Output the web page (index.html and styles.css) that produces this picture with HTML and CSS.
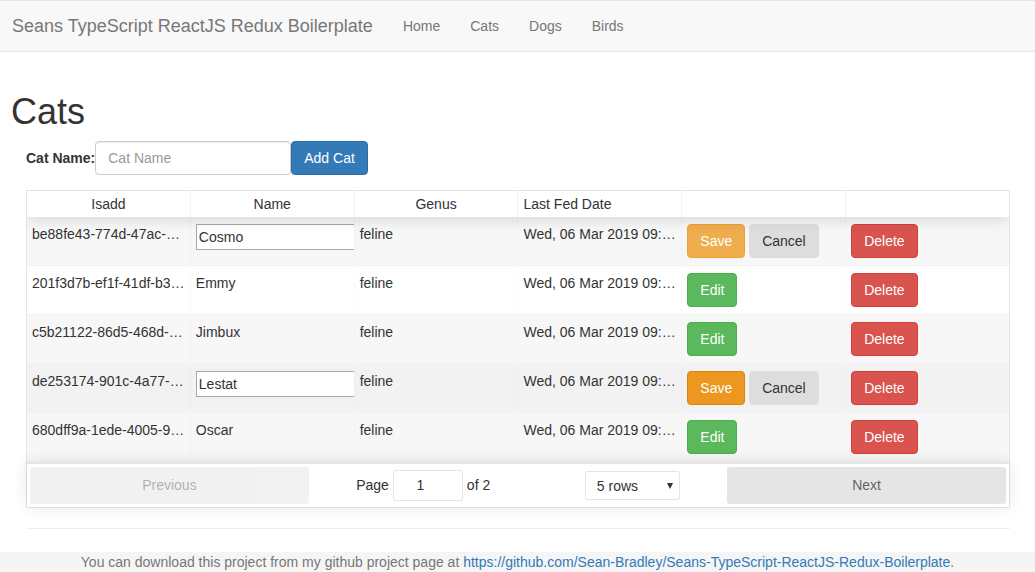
FILE: index.html
```html
<!DOCTYPE html>
<html lang="en">
<head>
<meta charset="utf-8">
<title>Cats</title>
<link rel="stylesheet" href="styles.css">
</head>
<body>
<nav class="navbar">
  <a class="brand" href="#">Seans TypeScript ReactJS Redux Boilerplate</a>
  <ul class="nav">
    <li><a href="#">Home</a></li>
    <li><a href="#">Cats</a></li>
    <li><a href="#">Dogs</a></li>
    <li><a href="#">Birds</a></li>
  </ul>
</nav>
<main class="page">
  <h1 class="title">Cats</h1>
  <div class="content">
    <form class="add-form">
      <label class="add-label">Cat Name:</label>
      <input class="form-control" type="text" placeholder="Cat Name">
      <button type="button" class="btn btn-primary">Add Cat</button>
    </form>

    <div class="rtable">
      <div class="rt-table">
        <div class="thead">
          <div class="tr">
            <div class="th">Isadd</div>
            <div class="th">Name</div>
            <div class="th">Genus</div>
            <div class="th th-left">Last Fed Date</div>
            <div class="th"></div>
            <div class="th"></div>
          </div>
        </div>
        <div class="tbody">
          <div class="tr-group">
            <div class="tr odd">
              <div class="td">be88fe43-774d-47ac-9f2b-3e1c5d7a8b90</div>
              <div class="td"><input class="cell-input" type="text" value="Cosmo"></div>
              <div class="td">feline</div>
              <div class="td">Wed, 06 Mar 2019 09:14:32 GMT</div>
              <div class="td"><button class="btn btn-warning">Save</button> <button class="btn btn-grey">Cancel</button></div>
              <div class="td"><button class="btn btn-danger">Delete</button></div>
            </div>
          </div>
          <div class="tr-group">
            <div class="tr">
              <div class="td">201f3d7b-ef1f-41df-b3a6-8c2d4e5f6a71</div>
              <div class="td">Emmy</div>
              <div class="td">feline</div>
              <div class="td">Wed, 06 Mar 2019 09:14:32 GMT</div>
              <div class="td"><button class="btn btn-success">Edit</button></div>
              <div class="td"><button class="btn btn-danger">Delete</button></div>
            </div>
          </div>
          <div class="tr-group">
            <div class="tr odd">
              <div class="td">c5b21122-86d5-468d-a1b2-7f3e9d0c4b55</div>
              <div class="td">Jimbux</div>
              <div class="td">feline</div>
              <div class="td">Wed, 06 Mar 2019 09:14:32 GMT</div>
              <div class="td"><button class="btn btn-success">Edit</button></div>
              <div class="td"><button class="btn btn-danger">Delete</button></div>
            </div>
          </div>
          <div class="tr-group">
            <div class="tr hover">
              <div class="td">de253174-901c-4a77-b5c8-2a6d1e3f9c08</div>
              <div class="td"><input class="cell-input" type="text" value="Lestat"></div>
              <div class="td">feline</div>
              <div class="td">Wed, 06 Mar 2019 09:14:32 GMT</div>
              <div class="td"><button class="btn btn-warning is-hover">Save</button> <button class="btn btn-grey">Cancel</button></div>
              <div class="td"><button class="btn btn-danger">Delete</button></div>
            </div>
          </div>
          <div class="tr-group">
            <div class="tr odd">
              <div class="td">680dff9a-1ede-4005-9c3b-5d8e7a2f1b64</div>
              <div class="td">Oscar</div>
              <div class="td">feline</div>
              <div class="td">Wed, 06 Mar 2019 09:14:32 GMT</div>
              <div class="td"><button class="btn btn-success">Edit</button></div>
              <div class="td"><button class="btn btn-danger">Delete</button></div>
            </div>
          </div>
        </div>
      </div>
      <div class="pagination">
        <div class="pg-side">
          <button class="pg-btn" disabled>Previous</button>
        </div>
        <div class="pg-center">
          <span class="page-info">Page <input class="page-jump" type="text" value="1"> of 2</span>
          <span class="page-size">
            <select class="size-select">
              <option>5 rows</option>
              <option>10 rows</option>
              <option>20 rows</option>
            </select>
          </span>
        </div>
        <div class="pg-side">
          <button class="pg-btn">Next</button>
        </div>
      </div>
    </div>
    <hr class="rule">
  </div>
</main>
<footer class="footer">
  You can download this project from my github project page at <a href="#">https://github.com/Sean-Bradley/Seans-TypeScript-ReactJS-Redux-Boilerplate</a>.
</footer>
</body>
</html>
```

FILE: styles.css
```css
* {
  box-sizing: border-box;
}

html, body {
  margin: 0;
  padding: 0;
}

body {
  font-family: "Liberation Sans", Arial, Helvetica, sans-serif;
  font-size: 14px;
  line-height: 20px;
  color: #333;
  background: #fff;
}

a {
  color: #337ab7;
  text-decoration: none;
}

/* Navbar */
.navbar {
  display: flex;
  align-items: stretch;
  height: 52px;
  background: #f8f8f8;
  border-top: 1px solid #e7e7e7;
  border-bottom: 1px solid #e7e7e7;
}

.brand {
  padding: 15px 15px 15px 12px;
  font-size: 18px;
  line-height: 20px;
  color: #777;
}

.nav {
  display: flex;
  list-style: none;
  margin: 0;
  padding: 0;
}

.nav a {
  display: block;
  padding: 15px;
  line-height: 20px;
  color: #777;
}

/* Page */
.page {
  padding: 40px 10px 0 11px;
}

.title {
  margin: 0 0 9px 0;
  font-size: 36px;
  font-weight: 500;
  line-height: 1.1;
  color: #333;
}

.content {
  margin: 0 15px 0 15px;
}

.add-form {
  display: flex;
  align-items: center;
  height: 34px;
  margin: 0 0 15px 0;
}

.add-label {
  font-weight: bold;
}

.form-control {
  width: 196px;
  height: 34px;
  padding: 6px 12px;
  font: inherit;
  color: #555;
  background: #fff;
  border: 1px solid #ccc;
  border-radius: 4px;
  box-shadow: inset 0 1px 1px rgba(0, 0, 0, .075);
}

.form-control::placeholder {
  color: #999;
}

/* Buttons */
.btn {
  display: inline-block;
  height: 34px;
  padding: 6px 12px;
  font-family: inherit;
  font-size: 14px;
  line-height: 20px;
  border: 1px solid transparent;
  border-radius: 4px;
  vertical-align: middle;
  cursor: pointer;
}

.btn-primary {
  color: #fff;
  background: #337ab7;
  border-color: #2e6da4;
}

.btn-warning {
  color: #fff;
  background: #f0ad4e;
  border-color: #eea236;
}

.btn-warning.is-hover {
  background: #ec971f;
  border-color: #d58512;
}

.btn-success {
  color: #fff;
  background: #5cb85c;
  border-color: #4cae4c;
}

.btn-danger {
  color: #fff;
  background: #d9534f;
  border-color: #d43f3a;
}

.btn-grey {
  color: #333;
  background: #dddddd;
  border-color: #dddddd;
}

/* React table */
.rtable {
  position: relative;
  display: flex;
  flex-direction: column;
  border: 1px solid rgba(0, 0, 0, 0.1);
}

.rt-table {
  display: flex;
  flex-direction: column;
  overflow: hidden;
}

.thead {
  position: relative;
  z-index: 1;
  box-shadow: 0 2px 15px 0 rgba(0, 0, 0, 0.15);
}

.tr {
  display: flex;
}

.th {
  flex: 1 1 0;
  min-width: 0;
  padding: 5px;
  line-height: normal;
  height: 26px;
  text-align: center;
  white-space: nowrap;
  overflow: hidden;
  border-right: 1px solid rgba(0, 0, 0, 0.05);
}

.th:last-child {
  border-right: 0;
}

.th-left {
  text-align: left;
}

.tr-group {
  border-bottom: 1px solid rgba(0, 0, 0, 0.05);
}

.tbody .tr {
  height: 48px;
}

.tr.odd {
  background: rgba(0, 0, 0, 0.03);
}

.tr.hover {
  background: rgba(0, 0, 0, 0.05);
}

.td {
  flex: 1 1 0;
  min-width: 0;
  padding: 7px 5px;
  white-space: nowrap;
  overflow: hidden;
  text-overflow: ellipsis;
  border-right: 1px solid rgba(0, 0, 0, 0.02);
}

.td:last-child {
  border-right: 0;
}

.cell-input {
  display: block;
  width: 200px;
  height: 26px;
  padding: 1px 2px;
  font: inherit;
  color: #333;
  background: #fff;
  border: 1px solid #a9a9a9;
  border-radius: 0;
}

/* Pagination */
.pagination {
  position: relative;
  z-index: 1;
  display: flex;
  align-items: stretch;
  padding: 3px;
  background: #fff;
  border-top: 2px solid rgba(0, 0, 0, 0.1);
  box-shadow: 0 0 15px 0 rgba(0, 0, 0, 0.1);
}

.pg-side {
  flex: 1 1 0;
  min-width: 0;
}

.pg-btn {
  display: block;
  width: 100%;
  height: 37px;
  padding: 6px;
  font-family: inherit;
  font-size: 14px;
  color: rgba(0, 0, 0, 0.6);
  background: rgba(0, 0, 0, 0.1);
  border: 0;
  border-radius: 3px;
}

.pg-btn[disabled] {
  opacity: 0.5;
}

.pg-center {
  flex: 1.5 1 0;
  min-width: 0;
  display: flex;
  align-items: center;
  justify-content: space-around;
}

.page-info {
  margin: 3px 10px;
  white-space: nowrap;
  display: flex;
  align-items: center;
  gap: 4px;
}

.page-jump {
  width: 70px;
  height: 31px;
  padding: 5px 22px 5px 7px;
  font: inherit;
  color: #333;
  text-align: center;
  background: #fff;
  border: 1px solid rgba(0, 0, 0, 0.1);
  border-radius: 3px;
}

.page-size {
  position: relative;
  margin: 3px 10px;
  display: block;
}

.page-size::after {
  content: "";
  position: absolute;
  right: 7px;
  top: 12px;
  border-left: 3px solid transparent;
  border-right: 3px solid transparent;
  border-top: 6px solid #333;
  pointer-events: none;
}

.size-select {
  display: block;
  width: 95px;
  height: 29px;
  padding: 4px 7px 4px 11px;
  font: inherit;
  color: #333;
  background: #fff;
  border: 1px solid rgba(0, 0, 0, 0.1);
  border-radius: 3px;
  -webkit-appearance: none;
  appearance: none;
}

.rule {
  margin: 20px 0 23px 0;
  border: 0;
  border-top: 1px solid #eee;
}

/* Footer */
.footer {
  background: #f5f5f5;
  color: #777;
  text-align: center;
  line-height: 20px;
  padding: 0 0 10px 0;
}
```
